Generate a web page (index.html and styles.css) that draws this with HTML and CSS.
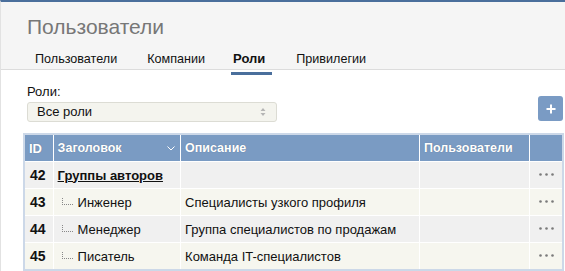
FILE: index.html
```html
<!DOCTYPE html>
<html lang="ru">
<head>
<meta charset="utf-8">
<link rel="stylesheet" href="styles.css">
</head>
<body>
<div class="page">
  <header class="head">
    <h1 class="title">Пользователи</h1>
    <nav class="tabs">
      <a class="tab">Пользователи</a>
      <a class="tab">Компании</a>
      <a class="tab active">Роли</a>
      <a class="tab">Привилегии</a>
    </nav>
  </header>
  <main class="content">
    <div class="toolbar">
      <div class="filter">
        <label class="lbl">Роли:</label>
        <div class="select">
          <span>Все роли</span>
          <svg class="updown" width="6" height="10" viewBox="0 0 6 10"><path d="M3 1 L5.5 4 H0.5 Z M3 9 L0.5 6 H5.5 Z" fill="#b5b5b5"/></svg>
        </div>
      </div>
      <button class="add"><svg width="12" height="12" viewBox="0 0 12 12"><path d="M6 1.5 V10.5 M1.5 6 H10.5" stroke="#fff" stroke-width="2"/></svg></button>
    </div>
    <table class="grid">
      <colgroup>
        <col class="c-id"><col class="c-title"><col class="c-desc"><col class="c-users"><col class="c-act">
      </colgroup>
      <thead>
        <tr>
          <th>ID</th>
          <th><div class="sort">Заголовок<svg width="8" height="5" viewBox="0 0 8 5"><path d="M0.5 0.5 L4 4 L7.5 0.5" stroke="#fff" fill="none" stroke-width="1"/></svg></div></th>
          <th>Описание</th>
          <th>Пользователи</th>
          <th></th>
        </tr>
      </thead>
      <tbody>
        <tr class="odd">
          <td class="id">42</td>
          <td><a class="group">Группы авторов</a></td>
          <td></td><td></td>
          <td class="act"><svg class="dots" width="15" height="3" viewBox="0 0 15 3"><circle cx="1.5" cy="1.5" r="1.3"/><circle cx="7.5" cy="1.5" r="1.3"/><circle cx="13.5" cy="1.5" r="1.3"/></svg></td>
        </tr>
        <tr class="even">
          <td class="id">43</td>
          <td><span class="tree"></span>Инженер</td>
          <td>Специалисты узкого профиля</td><td></td>
          <td class="act"><svg class="dots" width="15" height="3" viewBox="0 0 15 3"><circle cx="1.5" cy="1.5" r="1.3"/><circle cx="7.5" cy="1.5" r="1.3"/><circle cx="13.5" cy="1.5" r="1.3"/></svg></td>
        </tr>
        <tr class="odd">
          <td class="id">44</td>
          <td><span class="tree"></span>Менеджер</td>
          <td>Группа специалистов по продажам</td><td></td>
          <td class="act"><svg class="dots" width="15" height="3" viewBox="0 0 15 3"><circle cx="1.5" cy="1.5" r="1.3"/><circle cx="7.5" cy="1.5" r="1.3"/><circle cx="13.5" cy="1.5" r="1.3"/></svg></td>
        </tr>
        <tr class="even">
          <td class="id">45</td>
          <td><span class="tree"></span>Писатель</td>
          <td>Команда IT-специалистов</td><td></td>
          <td class="act"><svg class="dots" width="15" height="3" viewBox="0 0 15 3"><circle cx="1.5" cy="1.5" r="1.3"/><circle cx="7.5" cy="1.5" r="1.3"/><circle cx="13.5" cy="1.5" r="1.3"/></svg></td>
        </tr>
      </tbody>
    </table>
  </main>
</div>
</body>
</html>
```
FILE: styles.css
```css
html, body { margin: 0; padding: 0; background: #fff; }
body { font-family: "Liberation Sans", Arial, sans-serif; font-size: 13px; color: #111; }
.page { border-top: 2px solid #4a6f9c; border-left: 1px solid #e2e2e2; min-height: 269px; }
.head { background: #f5f5f5; border-bottom: 1px solid #dcdcdc; height: 67px; display: flex; flex-direction: column; }
.title { margin: 0; padding: 10px 0 0 26px; font-family: "Liberation Sans", Arial, sans-serif; font-weight: 400; font-size: 21px; line-height: 30px; color: #777; }
.tabs { display: flex; margin-top: 6px; padding-left: 34px; }
.tab { font-size: 12.6px; line-height: 18px; color: #111; padding: 2px 0 4px; border-bottom: 3px solid transparent; }
.tab:nth-child(2) { margin-left: 30px; }
.tab.active { font-weight: 700; font-size: 13px; border-bottom-color: #4a6f9c; margin-left: 26px; padding: 2px 7px 4px 2px; }
.tab:nth-child(4) { margin-left: 24px; }
.content { padding: 15px 2px 0 22px; }
.toolbar { display: flex; justify-content: space-between; align-items: flex-end; padding-left: 4px; }
.filter { display: flex; flex-direction: column; }
.lbl { line-height: 14px; margin-bottom: 3px; }
.select { width: 229px; height: 18px; border: 1px solid #dcdcd4; border-radius: 3px; background: #f4f4ee; display: flex; align-items: center; justify-content: space-between; padding: 0 10px 0 9px; }
.select span { line-height: 18px; }
.add { width: 25px; height: 25px; border: 0; border-radius: 3px; background: #7a9bc4; display: flex; align-items: center; justify-content: center; padding: 0; margin-bottom: 1px; }
.grid { margin-top: 11px; width: 541px; border-collapse: collapse; border: 2px solid #ccd8e8; table-layout: fixed; }
.c-id { width: 29px; } .c-title { width: 127px; } .c-desc { width: 238px; } .c-users { width: 110px; } .c-act { width: 33px; }
.grid th { background: #7a9bc3; color: #fff; font-weight: 700; text-align: left; height: 26px; padding: 0 4px; border-left: 1px solid #fff; text-shadow: 0 0 1px #5a6f8a; font-size: 12.5px; }
.grid th:first-child { border-left: 0; padding-left: 4px; font-size: 13px; }
.sort { display: flex; justify-content: space-between; align-items: center; }
.sort svg { margin-right: 1px; }
.grid td { height: 26px; padding: 0 4px; border-left: 1px solid #fff; border-top: 1px solid #fff; white-space: nowrap; }
.grid td:first-child { border-left: 0; }
.odd td { background: #f0f0f0; }
.even td { background: #f6f6ef; }
.id { font-weight: 700; font-size: 14px; padding-left: 5px !important; }
.group { font-weight: 700; color: #111; text-decoration: underline; }
.tree { display: inline-block; width: 10px; height: 6px; margin: 0 5px 0 4px; border-left: 1px dotted #888; border-bottom: 1px dotted #888; vertical-align: 2px; }
.act { text-align: center; padding: 0 !important; }
.dots { display: block; margin: -2px auto 0; fill: #7a7a7a; }
```
